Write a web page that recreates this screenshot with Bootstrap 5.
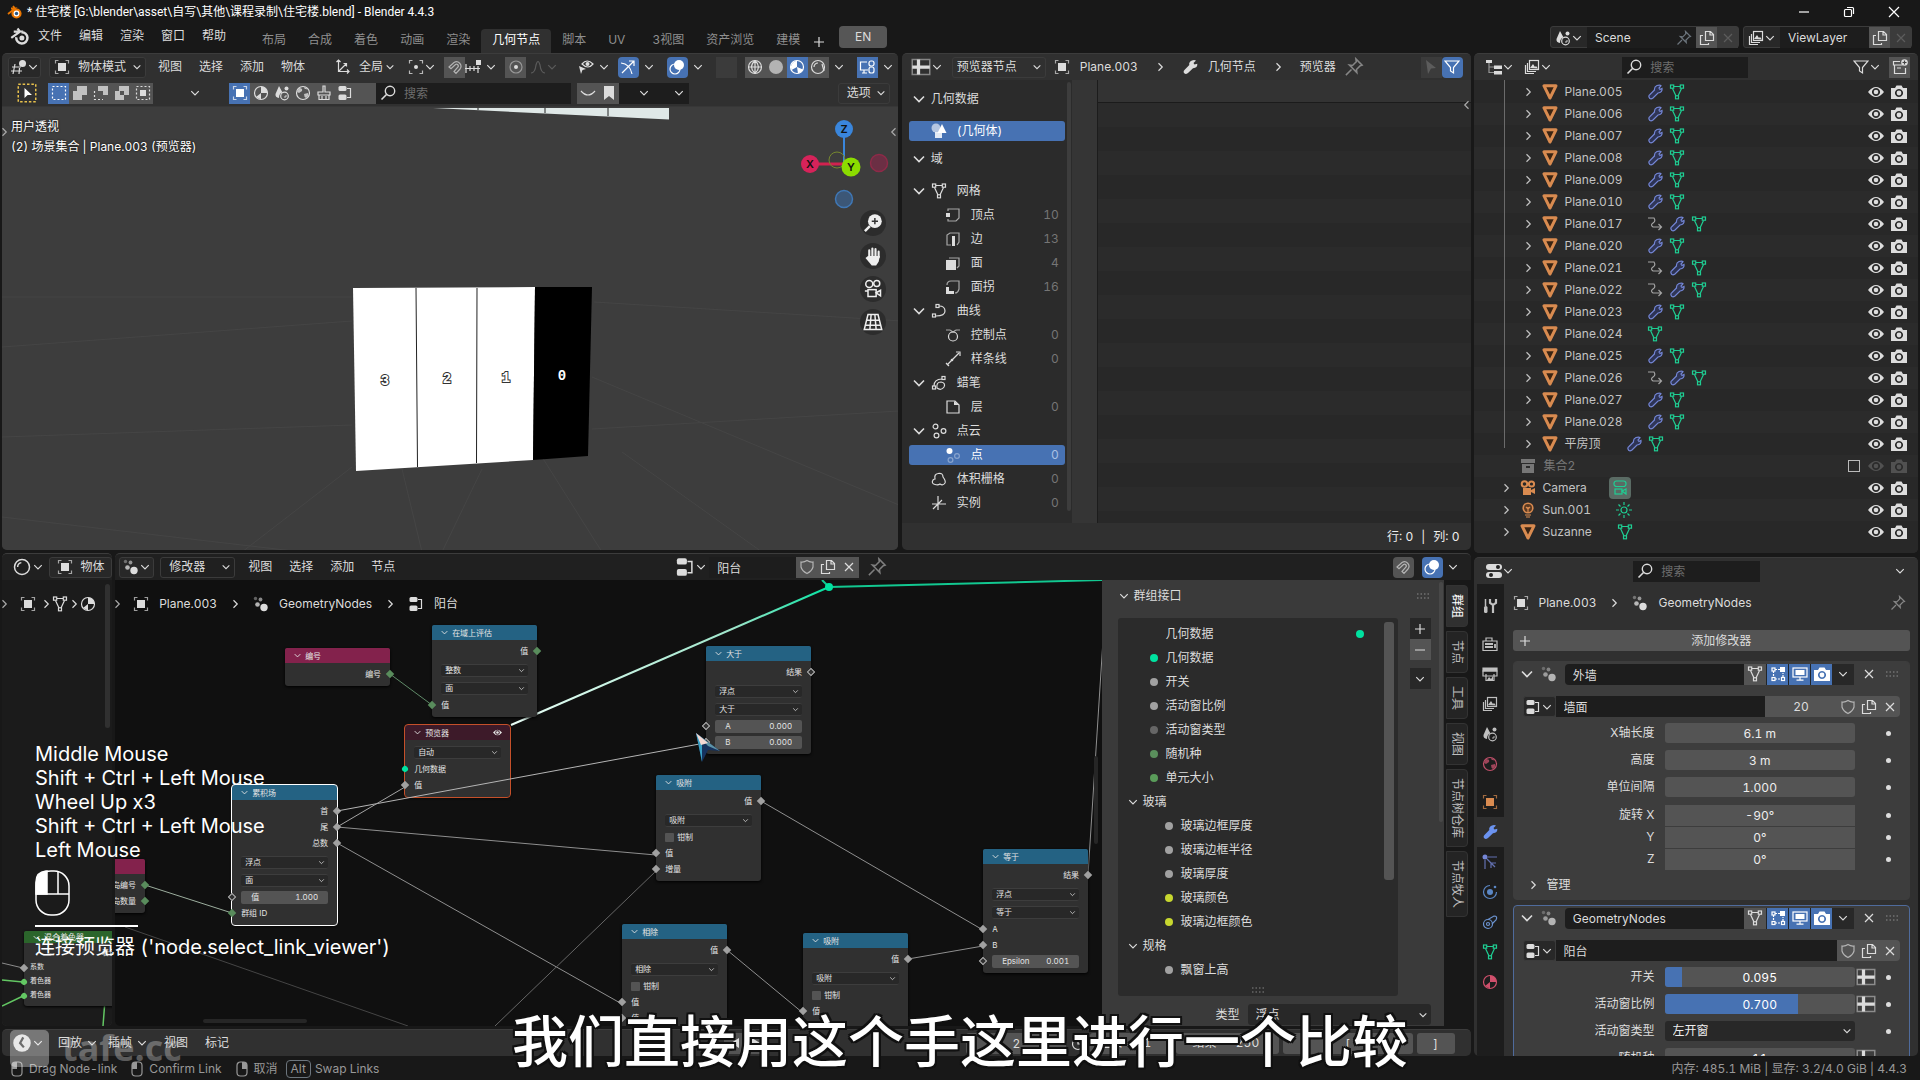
<!DOCTYPE html>
<html lang="zh-CN">
<head>
<meta charset="utf-8">
<meta name="viewport" content="width=device-width, initial-scale=1">
<title>住宅楼.blend - Blender 4.4.3</title>
<link href="https://cdn.jsdelivr.net/npm/bootstrap@5.3.0/dist/css/bootstrap.min.css" rel="stylesheet">
<style>
:root{--blue:#4772b3;--btn:#545454;--dark:#1d1d1d;--head:#303030;--txt:#dcdcdc}
html,body{height:100%}
body{background:#181818;color:var(--txt);font:12px/16px Inter,"Noto Sans CJK SC",sans-serif;font-variant-numeric:tabular-nums;overflow:hidden}
button,input,select{font:inherit;color:inherit;border:0;background:none;padding:0;margin:0;min-width:0}
a{color:inherit;text-decoration:none}
.ic{display:block;width:16px;height:16px;fill:none;stroke:currentColor;stroke-width:1.2;flex:none}
.ic-lg{width:20px;height:20px}.ic-sm{width:12px;height:12px}
i{display:block;flex:none;font-style:normal}
.nw{white-space:nowrap}
.titlebar{height:22px;padding:2px 18px 0 7px;color:#fff;font-family:Roboto,"Noto Sans CJK SC",sans-serif}
.winbtns{gap:29px}
.menubar{height:31px;padding:0 8px 0 10px}
.menus{display:flex;gap:17px}
.tabs a{display:block;padding:3px 11px 4px;color:#8f8f8f;border-radius:4px 4px 0 0}
.tabs a.on{background:var(--head);color:#fff}
.tabs{margin:7px 0 0 25px}
.enbtn{width:48px;height:22px;background:#565656;border-radius:4px;margin-left:12px}
.area{background:var(--head);border-radius:5px;overflow:hidden;border-top:1px solid #3c3c3c;min-width:0;min-height:0;display:flex;flex-direction:column}
.hd{height:26px;flex:none;display:flex;align-items:center}
.bx{height:21px;display:flex;align-items:center;justify-content:center;flex:none}
.sq{width:21px;height:21px;display:flex;align-items:center;justify-content:center;background:var(--btn);flex:none}
.sq.on{background:var(--blue);color:#fff}
.sq.dim{background:#3b3b3b;color:#5c5c5c}
.chip{background:#282828;border:1px solid #3b3b3b;border-radius:3px}
.fld{background:var(--dark);height:21px}
.fld::placeholder{color:#6d6d6d}
.h22{height:22px}
.pick{appearance:none;-webkit-appearance:none;background:transparent url("data:image/svg+xml,%3Csvg xmlns='http://www.w3.org/2000/svg' viewBox='0 0 12 12' fill='none' stroke='%23dddddd' stroke-width='1.3'%3E%3Cpath d='M2 4l4 4 4-4'/%3E%3C/svg%3E") no-repeat right 3px center/10px;height:21px}
.main{flex:1;min-height:0;padding:0 2px;gap:3px}
.leftcol{gap:3px;min-width:0}
.rightcol{flex:0 0 23.2%;gap:4px;min-width:0}
.row-top{flex:497 1 0;gap:4px;min-height:0}
.row-bot{flex:473 1 0;gap:3px;min-height:0}
.a-view{flex:0 0 61%}.a-shade{flex:0 0 7.5%}
.view{flex:1;position:relative;background:#3d3d3d;border-top:1px solid #373737;min-height:0}
.view svg.scene{position:absolute;inset:0;width:100%;height:100%}
.info{position:absolute;left:9px;top:10px;line-height:20px;color:#fff;text-shadow:0 0 2px #000}
.navs{position:absolute;right:12px;top:103px;gap:7px}
.navs button{width:26px;height:26px;border-radius:50%;background:#2c2c2c;display:flex;align-items:center;justify-content:center;color:#eee}
.fold{position:absolute;color:#aaa}
/* spreadsheet */
.ss-side{flex:0 0 170px;background:#2b2b2b;position:relative;padding:1px 7px 0}
.ss-h{height:36px;padding-left:2px}
.ss-r{height:20px;margin-bottom:4px;padding:0 6px 0 2px;border-radius:3px}
.ss-r.on{background:var(--blue);color:#fff}
.ss-r .cnt{color:#757575;margin-left:auto}
.ss-r.on .cnt{color:#a9c0e4}
.sbar{position:absolute;background:#3d3d3d;border-radius:3px}
.ss-col{flex:0 0 26px;background:#353535;border-right:1px solid #1c1c1c}
.ss-head{height:23px;background:#333;border-bottom:1px solid #1b1b1b}
.ss-body{flex:1;background:repeating-linear-gradient(#2b2b2b 0 24px,#282828 24px 48px)}
.ss-foot{height:27px;padding-right:11px;color:#eee}
/* outliner */
.ol{flex:1;background:#282828;position:relative;padding-top:1px;overflow:hidden}
.ol-r{height:22px;color:#c3c3c3;padding-right:11px}
.ol-r:nth-child(even){background:#2b2b2b}
.ol-line{position:absolute;left:30px;top:0;height:368px;border-left:1px solid #6b6b6b}
.or,.ptabs .or{color:#d98b50}.gr,.ptabs .gr{color:#1fce93}.bl,.ptabs .bl{color:#7486d6}
/* node editors */
.cv{position:relative;flex:1;background:#101010;overflow:hidden;min-width:0}
.cv>svg{position:absolute;inset:0;width:100%;height:100%}
.crumb{position:absolute;left:18px;top:16px;display:flex;align-items:center}
.crumb span,.pcrumb span{margin-left:10px}
.crumb .sep,.pcrumb .sep{margin:0 12px}
.nd{position:absolute;width:105px;background:#303030;border-radius:3px;font-size:8px;padding-bottom:4px;box-shadow:0 1px 3px #000;color:#e4e4e4}
.nd-h{height:15px;line-height:14px;margin-bottom:3px;border-radius:2px 2px 0 0;padding:0 8px;display:flex;align-items:center;gap:3px;background:#246283}
.nd-h.red{background:#83224c}.nd-h.vw{background:#3d1a29}.nd-h.grn{background:#2b652b;height:12px}
.nd .ic{width:9px;height:9px}
.nr{position:relative;height:16px;padding:0 9px;display:flex;align-items:center}
.nr.s{height:18px}.nr.f{margin-top:2px}
.nd-h.grn~.nr{height:14px;padding:0 6px;font-size:7px}
.nr .pick{width:100%;height:13px;background-color:#282828;background-size:7px;padding-left:4px;border-radius:2px;color:#e4e4e4;border-top:1px solid #3d3d3d;border-bottom:1px solid #3d3d3d;line-height:11px}
.nr .num{display:flex;width:100%;height:13px;background:#545454;border-radius:2px;padding:0 10px;align-items:center}
.nr .num input{width:32px;text-align:right;margin-left:auto}
.nr input[type=checkbox]{appearance:none;width:9px;height:9px;background:#545454;border-radius:1px;margin-right:3px}
.sk{position:absolute;width:6px;height:6px;top:5px;transform:rotate(45deg);background:#a1a1a1;border:0}
.sk.l{left:-3px}.sk.r{right:-3px}.sk.g{background:#598c5c}.sk.h{background:#303030;border:1px solid #b5b5b5}
.sk.c{border-radius:50%;background:#00e2a0}.sk.k{border-radius:50%;background:#63c763}
.gside{flex:0 0 342px;background:#3a3a3a;position:relative;padding:0 13px 0 16px;overflow:hidden}
.glist{flex:1;height:378px;background:#2b2b2b;border-radius:3px;position:relative;padding-top:4px}
.gr-r{height:24px;display:flex;align-items:center}
.dot{width:8px;height:8px;border-radius:50%;flex:none}
.gtabs{flex:0 0 26px;background:#181818;padding:5px 3px 0 2px;gap:4px}
.gtabs a{writing-mode:vertical-rl;text-orientation:sideways;background:#242424;border:1px solid #333;border-radius:0 4px 4px 0;padding:8px 2px;line-height:16px;color:#bdbdbd}
.gtabs a.on{background:#303030;color:#fff}
/* properties */
.ptabs{flex:0 0 27px;background:#1d1d1d;margin-left:3px;padding-top:7px}
.ptabs button{height:30px;width:27px;display:flex;align-items:center;justify-content:center;color:#c0c0c0}
.ptabs .gap8{margin-bottom:8px}
.pbody{flex:1;min-width:0;padding:0 8px 0 9px;overflow:hidden}
.pn{background:#3d3d3d;border-radius:4px;padding:1px 9px 0 5px;border:1px solid #3d3d3d}
.pn.act{border-color:#4f6b9c}
.phead .sq{width:22px}
.pr{display:flex;align-items:center;height:20px;margin-bottom:7px}
.pr label{width:146px;text-align:right;padding-right:10px;flex:none}
.pr .val{flex:1;height:20px;background-color:var(--btn);text-align:center;border-radius:3px;min-width:0;color:#eee}
.pr .val.pick{background-color:#282828;text-align:left}
.pr .vw{flex:1;position:relative;height:20px;background:var(--btn);border-radius:3px;overflow:hidden;min-width:0}
.pr .vw input{position:relative;width:100%;height:20px;text-align:center;color:#fff}
.pr .bar{position:absolute;left:0;top:0;bottom:0;background:var(--blue)}
.pr .at{width:22px;display:flex;justify-content:center;flex:none}
.pr .kd{width:23px;flex:none;display:flex;justify-content:center}
.pr .kd::after{content:"";width:5px;height:5px;border-radius:50%;background:#ddd}
.tight{height:22px;margin:0}
.tight .val{height:21px;border-radius:0}
.tl{height:27px;flex:none}
.status{height:24px;color:#989898;padding:2px 13px 0 9px;align-items:center}
.keys{position:absolute;left:35px;top:742px;font-size:20px;line-height:24px;color:#fff;pointer-events:none}
.keys hr{width:103px;border:0;border-top:2px solid #fff;opacity:1;margin:9px 0 8px}
.caption1{position:absolute;left:0;right:0;bottom:6px;text-align:center;font:500 56px/72px "Noto Sans CJK SC",sans-serif;color:#fff;text-shadow:2px 0 #111,-2px 0 #111,0 2px #111,0 -2px #111,2px 2px #111,-2px -2px #111,2px -2px #111,-2px 2px #111;pointer-events:none}
.wm{position:absolute;left:10px;bottom:13px;gap:13px;align-items:center;opacity:.34;font:700 36px/38px "Open Sans",sans-serif;color:#ddd;pointer-events:none}
.wm div{width:39px;height:37px;background:#fff;border-radius:5px}
.tnum{background:var(--btn);height:21px;border-radius:3px}
.cursor{position:absolute;left:694px;top:731px}
</style>
</head>
<body class="d-flex flex-column position-relative">
<header class="titlebar d-flex align-items-center nw">
 <i data-i="blenderc"></i><span class="ms-1">* 住宅楼 [G:\blender\asset\自写\其他\课程录制\住宅楼.blend] - Blender 4.4.3</span>
 <div class="winbtns d-flex ms-auto">
  <button aria-label="最小化"><i data-i="min"></i></button><button aria-label="还原"><i data-i="restore"></i></button><button aria-label="关闭"><i data-i="close"></i></button>
 </div>
</header>
<nav class="menubar d-flex nw">
 <div class="d-flex align-items-center pb-1"><i data-i="blender" data-c="ic-lg"></i>
 <div class="menus ms-2"><a href="#">文件</a><a href="#">编辑</a><a href="#">渲染</a><a href="#">窗口</a><a href="#">帮助</a></div></div>
 <div class="tabs d-flex"><a href="#">布局</a><a href="#">合成</a><a href="#">着色</a><a href="#">动画</a><a href="#">渲染</a><a href="#" class="on">几何节点</a><a href="#">脚本</a><a href="#">UV</a><a href="#" class="ps-3">3视图</a><a href="#">资产浏览</a><a href="#">建模</a></div>
 <button class="mt-2" aria-label="添加工作区"><i data-i="plus"></i></button>
 <button class="enbtn mt-1">EN</button>
 <div class="d-flex ms-auto mt-1">
  <div class="d-flex chip h22 me-1"><button class="bx px-1" aria-label="场景"><i data-i="scene"></i><i data-i="cd" data-c="ic-sm"></i></button><input class="fld ps-2" style="width:89px" value="Scene" aria-label="场景名"><span class="fld bx pe-1 text-secondary"><i data-i="pin"></i></span><button class="sq" aria-label="新建场景"><i data-i="copy"></i></button><button class="sq dim" aria-label="删除场景"><i data-i="x"></i></button></div>
  <div class="d-flex chip h22"><button class="bx px-1" aria-label="视图层"><i data-i="vlayer"></i><i data-i="cd" data-c="ic-sm"></i></button><input class="fld ps-2" style="width:89px" value="ViewLayer" aria-label="视图层名"><button class="sq" aria-label="新建视图层"><i data-i="copy"></i></button><button class="sq dim" aria-label="删除视图层"><i data-i="x"></i></button></div>
 </div>
</nav>

<main class="main d-flex">
<div class="leftcol d-flex flex-column flex-fill">
 <div class="row-top d-flex">
  <!-- 3D viewport -->
  <section class="area a-view nw">
   <div class="hd pe-1" style="padding-left:6px">
    <button class="bx chip" style="width:33px" aria-label="编辑器类型"><i data-i="ed3d"></i><i data-i="cd" data-c="ic-sm"></i></button>
    <label class="bx chip ps-1" style="margin-left:8px"><i data-i="obj"></i><select class="pick ps-2" style="width:75px" aria-label="模式"><option>物体模式</option></select></label>
    <div class="menus" style="margin-left:12px"><a href="#">视图</a><a href="#">选择</a><a href="#">添加</a><a href="#">物体</a></div>
    <label class="bx" style="margin-left:30px"><i data-i="axes"></i><select class="pick ps-2" style="width:47px" aria-label="坐标系"><option>全局</option></select></label>
    <button class="bx" style="margin-left:10px" aria-label="轴心点"><i data-i="pivot"></i><i data-i="cd" data-c="ic-sm"></i></button>
    <button class="sq ms-2" aria-label="吸附"><i data-i="magnet"></i></button><button class="bx" aria-label="吸附至"><i data-i="snap"></i><i class="ms-1" data-i="cd" data-c="ic-sm"></i></button>
    <button class="sq ms-2" aria-label="衰减编辑"><i data-i="prop"></i></button><button class="bx ps-1 opacity-25" aria-label="衰减"><i data-i="fall"></i><i data-i="cd" data-c="ic-sm"></i></button>
    <div class="d-flex ms-auto align-items-center">
     <button class="bx" aria-label="可见性"><i data-i="vis"></i><i class="ms-1" data-i="cd" data-c="ic-sm"></i></button>
     <button class="sq on ms-2 rounded-1" aria-label="Gizmo"><i data-i="gizmo"></i></button><button class="bx px-1" aria-label="Gizmo 选项"><i data-i="cd" data-c="ic-sm"></i></button>
     <button class="sq on ms-2 rounded-1" aria-label="叠加层"><i data-i="over"></i></button><button class="bx px-1" aria-label="叠加层选项"><i data-i="cd" data-c="ic-sm"></i></button>
     <button class="sq dim ms-2" aria-label="透视"></button>
     <button class="sq ms-2" aria-label="线框"><i data-i="wire"></i></button><button class="sq" aria-label="实体"><i data-i="solid"></i></button><button class="sq on" aria-label="材质预览"><i data-i="mprev"></i></button><button class="sq" aria-label="渲染"><i data-i="rend"></i></button><button class="bx px-1" aria-label="着色选项"><i data-i="cd" data-c="ic-sm"></i></button>
     <button class="sq on ms-2" aria-label="屏幕"><i data-i="link"></i></button><button class="bx ps-1" aria-label="更多"><i data-i="cd" data-c="ic-sm"></i></button>
    </div>
   </div>
   <div class="hd pe-2" style="padding-left:14px">
    <button class="bx" style="width:22px;color:#e8c14c" aria-label="选择工具"><i data-i="tool1" data-c="ic-lg"></i></button>
    <div class="d-flex" style="margin-left:10px"><button class="sq on" aria-label="新选区"><i data-i="s1"></i></button><button class="sq" aria-label="扩展"><i data-i="s2"></i></button><button class="sq" aria-label="减去"><i data-i="s3"></i></button><button class="sq" aria-label="反转"><i data-i="s4"></i></button><button class="sq" aria-label="相交"><i data-i="s5"></i></button></div>
    <button class="bx ps-2" style="width:76px" aria-label="展开"><i data-i="cd" data-c="ic-sm"></i></button>
    <div class="d-flex"><button class="sq on" aria-label="物体"><i data-i="obj"></i></button><button class="sq" aria-label="材质"><i data-i="mat"></i></button><button class="sq" aria-label="场景"><i data-i="scene"></i></button><button class="sq" aria-label="世界"><i data-i="world"></i></button><button class="sq" aria-label="笔刷"><i data-i="brush"></i></button><button class="sq" aria-label="节点组"><i data-i="tree"></i></button><button class="sq" aria-label="空"></button></div>
    <label class="d-flex align-items-center fld ps-1"><i data-i="search"></i><input class="fld ps-2" style="width:175px" placeholder="搜索" aria-label="搜索"></label>
    <div class="d-flex" style="margin-left:6px"><button class="sq" aria-label="筛选"><i data-i="arc"></i></button><button class="sq" aria-label="书签"><i data-i="mark"></i></button></div>
    <button class="bx fld justify-content-end pe-1" style="width:35px" aria-label="选项一"><i data-i="cd" data-c="ic-sm"></i></button><button class="bx fld justify-content-end pe-1" style="width:35px" aria-label="选项二"><i data-i="cd" data-c="ic-sm"></i></button>
    <select class="pick chip ms-auto ps-2" style="width:52px" aria-label="选项"><option>选项</option></select>
   </div>
   <div class="view">
    <svg class="scene" aria-hidden="true">
     <g stroke="#454545" fill="none"><path d="M0 190H350M592 195L900 214M0 330L350 318M590 322L897 304M480 362L440 445M400 362L420 445M350 360L240 445M540 350L600 445M590 270L897 398M0 240L350 214M0 410L300 445M620 345L760 445"/></g>
     <path d="M431 1H667V12.500Z" fill="#dfe8e7"/><path d="M476 1v2M543 1v5M606 1v8" stroke="#222"/>
     <path d="M351 181L533 180 531 353 354 364Z" fill="#fff"/><path d="M533 180L590 180 586 349 531 353Z" fill="#000"/>
     <path d="M414 181L415.500 360M475 181L474.500 356" stroke="#222"/>
     <g font-size="14" font-weight="700" font-family="Liberation Mono" text-anchor="middle" stroke="#333" stroke-width="2" paint-order="stroke" fill="#fff"><text x="383" y="278">3</text><text x="445" y="276">2</text><text x="504" y="275">1</text><text x="560" y="273" stroke="none">0</text></g>
     <path d="M842 22V58" stroke="#3a86dc" stroke-width="2"/><path d="M808 57H849" stroke="#d1224f" stroke-width="3"/>
     <circle cx="835" cy="53" r="8" stroke="#76882f" fill="none"/><circle cx="842" cy="92" r="8.500" fill="#3c5777" stroke="#3f77b5" stroke-width="1.500"/><circle cx="877" cy="56" r="8.500" fill="#6b2f44" stroke="#8d2a48" stroke-width="1.500"/>
     <circle cx="842" cy="22" r="9" fill="#3a86dc"/><circle cx="808" cy="57" r="9" fill="#d6235a"/><circle cx="849" cy="60" r="9.500" fill="#8bdc00"/>
     <g font-size="11" font-weight="600" text-anchor="middle" fill="#111"><text x="842" y="26">Z</text><text x="808" y="61">X</text><text x="849" y="64">Y</text></g>
    </svg>
    <div class="info">用户透视<br>(2) 场景集合 | Plane.003 (预览器)</div>
    <div class="navs d-flex flex-column"><button aria-label="缩放"><i data-i="zoom" data-c="ic-lg"></i></button><button aria-label="平移"><i data-i="hand" data-c="ic-lg"></i></button><button aria-label="相机"><i data-i="movie" data-c="ic-lg"></i></button><button aria-label="透视"><i data-i="grid" data-c="ic-lg"></i></button></div>
    <i class="fold" style="right:-2px;top:19px" data-i="cl" data-c="ic-sm"></i><i class="fold" style="left:-4px;top:19px" data-i="cr" data-c="ic-sm"></i>
   </div>
  </section>
  <!-- spreadsheet -->
  <section class="area flex-fill nw position-relative">
   <div class="hd ps-2 pe-2">
    <button class="bx" style="width:34px" aria-label="编辑器类型"><i data-i="sheet" data-c="ic-lg"></i><i data-i="cd" data-c="ic-sm"></i></button>
    <select class="pick chip ms-2 ps-1" style="width:94px" aria-label="数据源"><option>预览器节点</option></select>
    <i class="ms-2" data-i="obj"></i><span style="margin-left:10px">Plane.003</span><i class="mx-3" data-i="cr" data-c="ic-sm"></i><i data-i="wrenchf"></i><span style="margin-left:10px">几何节点</span><i class="mx-3" data-i="cr" data-c="ic-sm"></i><span>预览器</span><i class="ms-2 opacity-50" data-i="pin" data-c="ic-lg"></i>
    <button class="sq dim ms-auto" aria-label="仅选中"><i data-i="arrow"></i></button><button class="sq on rounded-1" aria-label="筛选"><i data-i="filter"></i></button>
   </div>
   <div class="d-flex flex-fill" style="min-height:0">
    <div class="ss-side" id="ss"><div class="sbar" style="left:165px;top:2px;width:4px;bottom:12px"></div>
     <div class="ss-h d-flex align-items-center"><i data-i="cd"></i><span class="ms-1">几何数据</span></div></div>
    <div class="ss-col"></div>
    <div class="d-flex flex-column flex-fill"><div class="ss-head"></div><div class="ss-body"></div></div>
   </div>
   <div class="ss-foot d-flex align-items-center justify-content-end gap-2"><span>行: 0</span><span>|</span><span>列: 0</span></div>
   <i class="fold" style="right:-2px;top:45px" data-i="cl" data-c="ic-sm"></i>
  </section>
 </div>
 <div class="row-bot d-flex">
  <!-- shader editor -->
  <section class="area a-shade nw">
   <div class="hd" style="background:#202020;padding-left:9px"><button class="bx" style="width:34px" aria-label="编辑器类型"><i data-i="ball" data-c="ic-lg"></i><i data-i="cd" data-c="ic-sm"></i></button><button class="bx chip ms-1 px-1 flex-fill"><i data-i="obj"></i><span class="ms-2">物体</span></button></div>
   <div class="cv" id="cv0" style="background:#1b1b1b">
    <svg aria-hidden="true"><g fill="none"><path d="M0 383L21 388" stroke="#8c8c8c"/><path d="M0 400L21 402M0 426L21 416M101 446L103 420" stroke="#63c763" stroke-width="1.500"/></g></svg>
    <div class="crumb"><i data-i="obj"></i><i class="ms-1" data-i="cr" data-c="ic-sm"></i><i data-i="mesh"></i><i data-i="cr" data-c="ic-sm"></i><i data-i="mat"></i></div>
    <i class="fold" style="left:-4px;top:18px" data-i="cr" data-c="ic-sm"></i><i class="fold" style="right:-2px;top:18px" data-i="cl" data-c="ic-sm"></i>
    <div class="sbar" style="right:2px;top:4px;width:5px;height:144px;background:#303030"></div>
   </div>
  </section>
  <!-- geometry nodes -->
  <section class="area flex-fill nw" style="background:#202020">
   <div class="hd ps-1 pe-2">
    <button class="bx chip" style="width:35px" aria-label="编辑器类型"><i data-i="geo"></i><i data-i="cd" data-c="ic-sm"></i></button>
    <select class="pick chip ps-2" style="width:75px;margin-left:6px" aria-label="节点树类型"><option>修改器</option></select>
    <div class="menus" style="margin-left:13px"><a href="#">视图</a><a href="#">选择</a><a href="#">添加</a><a href="#">节点</a></div>
    <div style="flex:278 1 0"></div>
    <div class="d-flex align-items-center"><button class="bx" style="width:36px" aria-label="节点组"><i data-i="tree" data-c="ic-lg"></i><i data-i="cd" data-c="ic-sm"></i></button><input class="fld ps-2" style="width:87px" value="阳台" aria-label="节点组名"><button class="sq" aria-label="伪用户"><i data-i="shield"></i></button><button class="sq" aria-label="新建"><i data-i="copy"></i></button><button class="sq" aria-label="断开"><i data-i="x"></i></button><i class="ms-2 opacity-50" data-i="pin" data-c="ic-lg"></i></div>
    <div style="flex:505 1 0"></div>
    <button class="sq rounded-1" aria-label="吸附"><i data-i="magnet"></i></button><button class="sq on rounded-1 ms-2" aria-label="叠加层"><i data-i="over"></i></button><button class="bx px-1" aria-label="叠加层选项"><i data-i="cd" data-c="ic-sm"></i></button>
   </div>
   <div class="d-flex flex-fill" style="min-height:0">
    <div class="cv" id="cv1">
     <svg id="lk0" aria-hidden="true"><defs><linearGradient id="lg" x1="0" y1="1" x2="1" y2="0"><stop offset="0" stop-color="#eafff7"/><stop offset=".7" stop-color="#9fe6cb"/><stop offset="1" stop-color="#00e2a0"/></linearGradient></defs></svg>
     <div class="crumb"><i data-i="obj"></i><span>Plane.003</span><i class="sep" data-i="cr" data-c="ic-sm"></i><i data-i="geo"></i><span>GeometryNodes</span><i class="sep" data-i="cr" data-c="ic-sm"></i><i data-i="tree"></i><span>阳台</span></div>
     <div class="sbar" style="right:4px;top:176px;width:4px;height:88px;background:#262626"></div>
     <div class="sbar" style="left:88px;bottom:3px;width:104px;height:4px;background:#262626"></div>
     <i class="fold" style="left:-4px;top:18px" data-i="cr" data-c="ic-sm"></i>
    </div>
    <aside class="gside"><div class="sbar" style="right:1px;top:2px;width:4px;height:240px;background:#484848"></div>
     <div class="d-flex align-items-center" style="height:38px;padding-bottom:6px"><i data-i="cd" data-c="ic-sm"></i><span class="ms-1">群组接口</span><i class="ms-auto opacity-50" data-i="grip"></i></div>
     <div class="d-flex">
      <div class="glist" id="gl"><div class="sbar" style="right:4px;top:4px;width:10px;height:258px;background:#545454"></div></div>
      <div class="ms-2 d-flex flex-column"><button class="sq ms-1" style="background:#282828" aria-label="添加"><i data-i="plus"></i></button><button class="sq ms-1" aria-label="移除"><i data-i="minus"></i></button><button class="sq ms-1 mt-2" style="background:#282828" aria-label="更多"><i data-i="cd" data-c="ic-sm"></i></button></div>
     </div>
     <div class="d-flex align-items-center mt-2 justify-content-end"><label for="tp" class="me-2">类型</label><select id="tp" class="pick ps-2" style="width:183px;background-color:#282828;border-radius:3px"><option>浮点</option></select></div>
    </aside>
    <nav class="gtabs d-flex flex-column"><a href="#" class="on">群组</a><a href="#">节点</a><a href="#">工具</a><a href="#">视图</a><a href="#">节点树仓库</a><a href="#">节点牧人</a></nav>
   </div>
  </section>
 </div>
 <!-- timeline -->
 <section class="area tl nw flex-row align-items-center ps-2">
  <button class="bx" style="width:36px" aria-label="编辑器类型"><i data-i="clock" data-c="ic-lg"></i><i data-i="cd" data-c="ic-sm"></i></button>
  <button class="bx ms-2 ps-1">回放<i class="ms-1" data-i="cd" data-c="ic-sm"></i></button><button class="bx" style="margin-left:10px">插帧<i class="ms-1" data-i="cd" data-c="ic-sm"></i></button><div class="menus ms-3"><a href="#">视图</a><a href="#">标记</a></div>
  <div class="d-flex ms-auto align-items-center pe-3 gap-1"><div class="d-flex me-5 pe-5"><button class="sq" aria-label="首帧"><i data-i="pl"></i></button><button class="sq" aria-label="播放"><i data-i="pr"></i></button></div><div class="me-5 pe-5"></div><input class="tnum text-center" style="width:100px" value="2" aria-label="当前帧"><i data-i="clk"></i><label class="tnum d-flex align-items-center ps-2">起始<input class="text-center" style="width:50px" value="1"></label><label class="tnum d-flex align-items-center ps-3">结束<input class="text-center" style="width:62px" value="250"></label><input class="tnum text-center" style="width:130px" value="[" aria-label="预览起始"><input class="tnum text-center" style="width:38px" value="]" aria-label="预览结束"></div>
 </section>
</div>

<div class="rightcol d-flex flex-column">
 <!-- outliner -->
 <section class="area nw" style="flex:500 1 0">
  <div class="hd ps-2 pe-2">
   <button class="bx ps-1" style="width:32px" aria-label="编辑器类型"><i data-i="outl"></i><i data-i="cd" data-c="ic-sm"></i></button><button class="bx ms-2" style="width:32px" aria-label="显示模式"><i data-i="vlayer"></i><i data-i="cd" data-c="ic-sm"></i></button>
   <div style="flex:67 1 0"></div>
   <label class="d-flex align-items-center fld ps-1"><i data-i="search"></i><input class="fld ps-2" style="width:106px" placeholder="搜索" aria-label="搜索大纲"></label>
   <div style="flex:102 1 0"></div>
   <button class="bx me-2" aria-label="筛选"><i data-i="filter"></i><i data-i="cd" data-c="ic-sm"></i></button><button class="sq" aria-label="新建集合"><i data-i="newcol"></i></button>
  </div>
  <div class="ol"><div id="ol"></div><div class="ol-line"></div></div>
 </section>
 <!-- properties -->
 <section class="area nw" style="flex:499 1 0">
  <div class="hd ps-2 pe-2"><button class="bx ps-1" style="width:32px" aria-label="编辑器类型"><i data-i="props"></i><i data-i="cd" data-c="ic-sm"></i></button>
   <div style="flex:118 1 0"></div><label class="d-flex align-items-center fld ps-1"><i data-i="search"></i><input class="fld ps-2" style="width:107px" placeholder="搜索" aria-label="搜索属性"></label><div style="flex:132 1 0"></div><button class="bx pe-1" aria-label="选项"><i data-i="cd" data-c="ic-sm"></i></button></div>
  <div class="d-flex flex-fill" style="min-height:0">
   <nav class="ptabs">
    <button class="gap8" aria-label="工具"><i data-i="tools"></i></button><button aria-label="渲染"><i data-i="render"></i></button><button aria-label="输出"><i data-i="printer"></i></button><button aria-label="视图层"><i data-i="vlayer"></i></button><button aria-label="场景"><i data-i="scene"></i></button><button class="gap8" style="color:#c0506a" aria-label="世界"><i data-i="world"></i></button><button class="or" aria-label="物体"><i data-i="obj"></i></button><button style="background:#303030;color:#6b93f0" aria-label="修改器"><i data-i="wrenchf"></i></button><button class="bl" aria-label="粒子"><i data-i="part"></i></button><button style="color:#5b87c5" aria-label="物理"><i data-i="phys"></i></button><button style="color:#6b93d0" aria-label="约束"><i data-i="cons"></i></button><button class="gr" aria-label="数据"><i data-i="mesh"></i></button><button style="color:#d0506c" aria-label="材质"><i data-i="mat"></i></button>
   </nav>
   <div class="pbody">
    <div class="pcrumb d-flex align-items-center" style="height:42px;padding-bottom:4px"><i data-i="obj"></i><span>Plane.003</span><i class="sep" data-i="cr" data-c="ic-sm"></i><i data-i="geo"></i><span>GeometryNodes</span><i class="ms-auto me-1 opacity-50" data-i="pin"></i></div>
    <button class="d-flex w-100 align-items-center ps-1 mt-1" style="height:21px;background:#545454;border-radius:3px;margin-bottom:10px"><i data-i="plus"></i><span class="flex-fill text-center">添加修改器</span></button>
    <div id="pn"></div>
   </div>
  </div>
 </section>
</div>
</main>
<footer class="status d-flex nw"><i data-i="ml"></i><span class="ms-1">Drag Node-link</span><i class="ms-2 ps-1" data-i="ml"></i><span class="ms-1">Confirm Link</span><i class="ms-2 ps-1" data-i="mr"></i><span class="ms-1">取消</span><kbd class="ms-2 py-0 px-1 border border-secondary bg-transparent rounded-1" style="font:inherit;color:inherit">Alt</kbd><span class="ms-1">Swap Links</span><span class="ms-auto">内存: 485.1 MiB | 显存: 3.2/4.0 GiB | 4.4.3</span></footer>

<div class="wm d-flex"><div></div><span>tafe.cc</span></div>
<div class="keys nw">Middle Mouse<br>Shift + Ctrl + Left Mouse<br>Wheel Up x3<br>Shift + Ctrl + Left Mouse<br>Left Mouse
 <svg class="d-block mt-2" width="36" height="46" fill="none" stroke="#fff" stroke-width="1.500" aria-hidden="true"><path d="M12 1H11Q1 2 1 12V24H12Z" fill="#fff"/><rect x="1" y="1" width="33" height="44" rx="15"/><path d="M1 24H34M23 1V24"/></svg>
 <hr>连接预览器 ('node.select_link_viewer')</div>
<svg class="cursor" width="30" height="36" aria-hidden="true"><path d="M2 2L26 20 14 19 8 31Z" fill="#16325e"/><path d="M2 2L26 20 14 15Z" fill="#5d93a8"/><path d="M2 2L8 31 8 12Z" fill="#3aa0c4"/><path d="M2 2L14 12 7 14Z" fill="#f4d9d4"/></svg>
<div class="caption1 nw">我们直接用这个手这里进行一个比较</div>

<script src="https://cdn.jsdelivr.net/npm/bootstrap@5.3.0/dist/js/bootstrap.bundle.min.js"></script>
<script>
const F='fill="currentColor" stroke="none"';
const P={
blender:`<path d="M1 9.500L8 4.500H3M8 4.500L6 2" stroke-width="1.800"/><path d="M5 9a4.500 4.500 0 1 0 4-4" stroke-width="2"/><circle cx="9.500" cy="9.500" r="2" ${F}/>`,
blenderc:`<path d="M1 10L8 4.500H4M8 4.500L6 2" stroke="#ea7600" stroke-width="1.800"/><circle cx="9.500" cy="9.500" r="4" stroke="#ea7600" stroke-width="2.200" fill="#fff"/><circle cx="9.500" cy="9.500" r="1.700" fill="#265787" stroke="none"/>`,
min:'<path d="M3 8h10"/>',restore:'<rect x="3.500" y="5.500" width="7" height="7" rx="1"/><path d="M6 3.500h5.500q1 0 1 1V10"/>',close:'<path d="M3 3l10 10M13 3L3 13"/>',
plus:'<path d="M8 3v10M3 8h10"/>',minus:'<path d="M3 8h10"/>',x:'<path d="M4 4l8 8M12 4l-8 8"/>',
cd:'<path d="M3 5.500l5 5 5-5" stroke-width="1.600"/>',cr:'<path d="M6 3l5 5-5 5" stroke-width="1.600"/>',cl:'<path d="M10 3L5 8l5 5" stroke-width="1.600"/>',
scene:`<path d="M5 1L1.500 9Q1 12.500 5 13 5 8 8.500 7.500Z" ${F}/><circle cx="12.500" cy="3.500" r="2" ${F}/><circle cx="10.500" cy="11" r="3.800"/><path d="M12 10v2h-2" stroke-width=".9"/>`,
pin:'<path d="M9.500 1.500l5 5-1.500.5-3 3 .3 2.500-6-6 2.500.3 3-3zM6 10l-4.500 4.500"/>',
copy:`<path d="M6.500 1.500h5l3 3v6h-8zM11 1.500V5h3.500"/><path d="M4 5.500H1.500v9h8V13"/>`,
vlayer:`<rect x="5.500" y="1.500" width="9" height="9"/><path d="M6 9l3-4 2 3 1-1 2 2.500z" ${F}/><path d="M3.500 4v8.500H12M1.500 6v8.500H10"/>`,
ed3d:`<path d="M1 8h9M0 12h11M4 5L2 15M8.500 9L8 15"/><circle cx="11.500" cy="4.500" r="3.500" ${F}/>`,
obj:`<rect x="4" y="4" width="8" height="8" ${F}/><path d="M1.500 4.500v-3h3M11.500 1.500h3v3M14.500 11.500v3h-3M4.500 14.500h-3v-3" opacity=".7"/>`,
axes:'<path d="M3.500 1v11.500H14M3.500 12.500L11 5M1.500 3l2-2 2 2M12 10.500l2 2-2 2M8.500 4.500H11.500v3"/>',
pivot:`<circle cx="8" cy="8" r="2" ${F}/><path d="M1.500 4.500v-3h3M11.500 1.500h3v3M14.500 11.500v3h-3M4.500 14.500h-3v-3" opacity=".8"/>`,
magnet:'<path d="M2 8L7 3.500a4.500 4.500 0 0 1 6 6.500L9 14.500 7 12.500l4-4.500a1.800 1.800 0 0 0-2.500-2.500L4 9.800z" opacity=".7"/>',
snap:`<path d="M1 5v9M5 7v5M9 7v5M13 7v7M0 9.500h15"/><rect x="11" y="1" width="5" height="5" ${F}/>`,
prop:`<circle cx="8" cy="8" r="6" opacity=".5"/><circle cx="8" cy="8" r="2" ${F}/>`,fall:'<path d="M1 14Q5 14 6 6 8-1 10 6 11 14 15 14"/>',
vis:`<path d="M4 5q5-6 11 0-5 6-11 0z"/><circle cx="9.500" cy="5" r="2" ${F}/><path d="M1 7l7 3-3.500 1L3 15z" ${F}/>`,
gizmo:'<path d="M2 14L14 2M9 2h5v5M1 4Q10 5 12 15"/>',
over:`<circle cx="10" cy="6" r="5" ${F}/><circle cx="6" cy="10" r="5"/>`,
wire:'<circle cx="8" cy="8" r="6.500"/><path d="M1.500 8h13M8 1.500v13M8 1.500q-7 6.500 0 13M8 1.500q7 6.500 0 13"/>',solid:`<circle cx="8" cy="8" r="7" ${F} opacity=".7"/>`,
mprev:`<circle cx="8" cy="8" r="6.500"/><path d="M8 1.500V8l6 2.500Q12 14 9 14.500L8 8 2.500 11Q0 4 8 1.500z" ${F}/>`,rend:'<circle cx="8" cy="8" r="6.500"/><path d="M4 8a4 4 0 0 1 4-4M12 5l2 7"/>',
link:'<path d="M8 3H1.500v8H9M5 11v3M3 14h5"/><rect x="10" y="2" width="5" height="5" rx="2"/><rect x="10" y="8" width="5" height="6" rx="2"/>',
tool1:`<rect x="1" y="1" width="14" height="14" stroke-dasharray="2 1.500"/><path d="M6 4v8l2.500-2.500H12z" fill="#fff" stroke="none"/>`,
s1:'<rect x="1.500" y="1.500" width="13" height="13" stroke-dasharray="2 2"/>',s2:`<path d="M5 1h10v9h-5v5H1V6h4z" ${F} opacity=".8"/>`,s3:`<path d="M5 1h10v9h-5V6H5z" ${F} opacity=".8"/><path d="M1.500 6v8.500H10" stroke-dasharray="2 2"/>`,s4:`<path fill-rule="evenodd" d="M5 1h10v9h-5v5H1V6h4zM6 6v4h4V6z" ${F} opacity=".8"/>`,s5:`<rect x="5" y="5" width="6" height="6" ${F}/><rect x="1.500" y="1.500" width="13" height="13" stroke-dasharray="2 2"/>`,
mat:`<circle cx="8" cy="8" r="6.500"/><path d="M8 1.500a6.500 6.500 0 0 1 6.500 6.500H8zM8 8v6.500L3 12z" ${F}/>`,
world:`<circle cx="8" cy="8" r="6.500"/><path d="M4 3q4 0 3 3l-3 2-2-1M9 2q0 3 4 2M9 9l4-1q1 3-2 5-2-1-2-4z" ${F} opacity=".8"/>`,
brush:'<path d="M7 1h2v6h5v3H2V7h5zM3 10v4.500h10V10M6 11v3M10 11v3"/>',
tree:`<rect x="1.500" y="1" width="8" height="5" rx="1.500" ${F}/><rect x="1.500" y="9.500" width="8" height="5.500" rx="1.500" ${F}/><path d="M10 3.500h3.500v9H10"/>`,
search:'<circle cx="10" cy="6" r="4.700" stroke-width="1.400"/><path d="M6.500 9.500L1.500 14.500" stroke-width="1.600"/>',
arc:'<path d="M1 6q7 8 14 0"/>',mark:`<path d="M3 1h10v14l-5-4-5 4z" ${F}/>`,
zoom:`<circle cx="9.500" cy="6.500" r="5.500" ${F}/><path d="M9.500 4v5M7 6.500h5" stroke="#333"/><path d="M5.500 10.500L1.500 14.500" stroke-width="2"/>`,
hand:'<path d="M5 9V3.500M7.500 8V2M10 8V2.500M12.500 9V4.500" stroke-width="1.700" stroke-linecap="round"/><path d="M4 8h9.500l-1 4.500-2 3H7L2 9.500l1-.8z" fill="currentColor" stroke="none"/>',
movie:'<circle cx="5" cy="4" r="2.800"/><circle cx="11" cy="3.500" r="2.400"/><rect x="4" y="8.500" width="6.500" height="5.500"/><path d="M10.500 11l3.500-2v4.500zM4 9.500H1.500"/>',
grid:'<path d="M4 2h8l3 12H1zM3 6.500h10M2 10.500h12M6.500 2L5.500 14M9.500 2l1 12"/>',
sheet:`<rect x="1" y="2" width="14" height="12" opacity=".5"/><path d="M6 2v12M1 8h14" stroke-width="2.600"/>`,
wrench:'<path d="M10 1.500q3-1 4 .2L12 4l1 1.500 2-1q.5 4-4 4.500L6 14q-3 2-4-1-.5-1.500 1-2.500l4.500-4.500Q7 3 10 1.500z" fill="rgba(60,80,190,.3)"/>',
wrenchf:`<path d="M10 1.500q2-1 4 0L11.500 4l1 1.500 2.800-.8q.5 4-4.300 4.600L6 14q-3 2-4.300-.5-.5-1.500 1-2.800l4.600-4.700Q6.500 3 10 1.500z" ${F}/>`,
arrow:`<path d="M3 1l10 8-5 .5L5 15z" ${F}/>`,filter:'<path d="M1 2h14L9.500 8.500V14L6.500 12V8.500z"/>',
prim:`<circle cx="5" cy="5" r="4.500" ${F} opacity=".6"/><path d="M11 1l4.500 9H6.500z" ${F}/><rect x="4" y="9" width="7" height="6" ${F} opacity=".85"/>`,
mesh:'<path d="M5 2.500h6M3.500 4.500L7 12M12.500 4.500L9 12"/><rect x="1.500" y="1" width="3.200" height="3.200"/><rect x="11.300" y="1" width="3.200" height="3.200"/><rect x="6.500" y="11.800" width="3" height="3"/>',
vert:`<rect x="1" y="6" width="4" height="4" ${F}/><path d="M3 4V2h11v9l-3 3H3v-2" opacity=".7"/>`,edge:`<rect x="7" y="5" width="3" height="10" ${F}/><path d="M6 14H2V4l3-2h9v9l-2 3" opacity=".7"/>`,face:`<rect x="1" y="5" width="10" height="10" ${F}/><path d="M4 3h10v8l-2 2" opacity=".7"/>`,corn:`<path d="M1 8h3v4h5v3H1z" ${F}/><path d="M2 6q0-4 4-4h8v8q-1 4-4 4" opacity=".7"/>`,
curve:'<rect x="1.500" y="11" width="3" height="3"/><rect x="5" y="1.500" width="3" height="3"/><path d="M8 3q6 0 6 5t-9 5"/>',ctrl:'<circle cx="8" cy="9.500" r="4.500"/><path d="M1 3h4M11 3h4M5 3l3 2 3-2" opacity=".7"/>',spl:`<path d="M2 14L14 2"/><path d="M1 12l3 3M11 1h4v4" /><circle cx="7" cy="9" r="1.300" ${F}/>`,
gp:'<rect x="1.500" y="11" width="3" height="3"/><rect x="11" y="1.500" width="3" height="3"/><path d="M3 11Q3 4 11 4M6 13q-1-6 4-6 5 1 3 5-3 4-7 1z"/>',layer:`<path d="M2 2h8l4 4v8H2z"/><path d="M9 2v4h5z" ${F}/>`,
pc:'<circle cx="4.500" cy="3.500" r="2.400"/><circle cx="12.500" cy="8" r="2.400"/><circle cx="5.500" cy="12.500" r="2.400"/>',pt:`<circle cx="4.500" cy="4" r="3" ${F}/><g opacity=".35"><circle cx="12" cy="9" r="2.400"/><circle cx="5.500" cy="13" r="2.400"/></g>`,
vol:'<path d="M4 13.500q-4-1-2-4.500 1-1 2-1-1-5 3-5.500 5-1 5 3.500 3 4 2 6-2 3-5 1-2 1.500-5 .5z"/>',inst:'<path d="M7 1v14M1 9h14M2 14l9-9"/>',
outl:`<rect x="0" y="1" width="6" height="3" ${F}/><rect x="8" y="6.500" width="8" height="3.500" ${F}/><rect x="8" y="12" width="8" height="3.500" ${F}/><path d="M3 4v9.500h5M3 8h5" opacity=".6"/>`,
newcol:`<path d="M8 2.500H1.500V6h9M2.500 6v8.500h11V9M5 9h4"/><circle cx="12.500" cy="3.500" r="3.300" ${F}/><path d="M12.500 1.500v4M10.500 3.500h4" stroke="#444"/>`,
tri:'<path d="M2 1.800h12L8 14z" stroke-width="3" fill="#3a2413" stroke-linejoin="round"/>',
eye:`<path fill-rule="evenodd" d="M0 8q8-10 16 0-8 10-16 0zM8 4a4 4 0 1 0 .01 0z" ${F}/><circle cx="8" cy="8" r="2.300" ${F}/>`,
cam:`<path fill-rule="evenodd" d="M0 4h4l1.500-2.500h5L12 4h4v11H0zM8 5a4 4 0 1 0 .01 0z" ${F}/><circle cx="8" cy="9" r="2.400" ${F}/>`,
bez:'<path d="M1 2h6q2 3-1 5-3 2 0 4h8M11.500 8l3 3-3 3"/>',coll:`<rect x="1" y="1" width="14" height="4" ${F}/><path fill-rule="evenodd" d="M2 6h12v9H2zM6 8v2h4V8z" ${F}/>`,
movief:`<circle cx="4.500" cy="4" r="2.800" stroke-width="2"/><circle cx="11.500" cy="4" r="2.600" stroke-width="2"/><path d="M3 8h8v2l4-2v6l-4-2v3H3z" ${F}/>`,
bulb:`<circle cx="8" cy="6" r="4.800" fill="#5b3a22" stroke-width="1.600"/><path d="M8 5v5M5 13h6M6 15h4M6 5l2 2 2-2"/>`,sun:'<circle cx="8" cy="8" r="3"/><path d="M8 0v3M8 13v3M0 8h3M13 8h3M2.500 2.500l2 2M11.500 11.500l2 2M13.500 2.500l-2 2M4.500 11.500l-2 2"/>',
camd:'<rect x="2" y="1" width="12" height="5.500" rx="2.500"/><rect x="3" y="9" width="7" height="5"/><path d="M10 11l4-2v5z"/>',
geo:`<circle cx="11" cy="11.500" r="3.700" ${F}/><circle cx="4.500" cy="8.500" r="2.300" ${F} opacity=".8"/><circle cx="7.500" cy="3.500" r="1.900" ${F} opacity=".6"/><circle cx="2.500" cy="2.500" r="1.700" ${F} opacity=".4"/>`,
shield:'<path d="M8 1.500q3 2 6 1.500v5q-1 4-6 6.500Q3 12 2 8V3q3 .5 6-1.500z" opacity=".7"/>',ball:'<circle cx="8" cy="8" r="6"/><path d="M4.500 8q0-3 3-3.500"/>',grip:'<path d="M2 6h12M2 10h12" stroke-dasharray="1.500 2"/>',
clock:`<circle cx="8" cy="8" r="7" ${F}/><path d="M9 3.500L6.500 8l3 3.500" stroke="#222" stroke-width="1.800"/>`,clk:'<circle cx="8" cy="9" r="5.500"/><path d="M8 5.500V9h3M6 1.500h4"/>',pl:`<path d="M12 3v10L4 8z" ${F}/>`,pr:`<path d="M4 3v10l8-5z" ${F}/>`,
props:`<rect x="0" y="1" width="16" height="6" rx="3" ${F}/><rect x="0" y="9" width="16" height="6" rx="3" ${F}/><circle cx="12" cy="4" r="2" fill="#222" stroke="none"/><circle cx="5" cy="12" r="2" fill="#222" stroke="none"/>`,
tools:`<path d="M3.500 1v7" stroke-width="1.500"/><rect x="2" y="8" width="3.500" height="7" rx="1.500" ${F}/><path d="M8 1v4l3 2 3-2V1M11 7v8" stroke-width="2.200"/>`,
render:`<path d="M1 5h14v9.500H1zM4 5V2h6v3"/><path d="M3 8h8M3 11h8M13 8v4" stroke-width="1.800"/>`,printer:`<path d="M1 2h14v3H1z" fill="currentColor"/><path d="M1 5h14v5H1zM4 8v6.500h8V8"/><path d="M5 14l2-3 2 2 2-3v4z" ${F}/>`,
part:`<circle cx="3" cy="3" r="2.500" ${F}/><path d="M6 3h9M3 6v9M5 5l8 8M9 9v5M9 9h5" opacity=".8"/>`,phys:`<circle cx="8" cy="8" r="3" ${F}/><path d="M8 1.500a6.500 6.500 0 1 0 6.500 6.500"/><circle cx="13" cy="3" r="1.300" ${F}/>`,
cons:'<circle cx="6" cy="10" r="4.500"/><circle cx="6" cy="10" r="1.500"/><path d="M6 5.500L12 2q4 0 2 4l-4 4"/>',
edit:`<path d="M3.500 5v7M5 13h7M13 11V7M5 3.500h5" stroke-dasharray="2 1"/><rect x="10" y="1" width="5" height="5" ${F}/><rect x="2" y="2" width="3" height="3"/><rect x="2" y="11.500" width="3" height="3"/><rect x="11.500" y="11.500" width="3" height="3"/>`,
mon:`<rect x="1" y="2" width="14" height="9"/><rect x="3.500" y="4" width="9" height="5" ${F}/><path d="M8 11v3M4.500 14.200h7"/>`,
ml:`<path d="M3 7V4q0-3 3-3h2v7H3z" ${F}/><rect x="3" y="1" width="10" height="14" rx="3.500"/>`,mr:`<path d="M8 1h2q3 0 3 3v4H8z" ${F}/><rect x="3" y="1" width="10" height="14" rx="3.500"/>`
};
const I=(n,c='',x='')=>`<svg class="ic ${c}" viewBox="0 0 16 16" aria-hidden="true" ${x}>${P[n]||''}</svg>`;
const $=s=>document.getElementById(s);
/* spreadsheet tree */
const S=[[0,'prim','(几何体)','',1],['h','域'],[0,'mesh','网格'],[1,'vert','顶点',10],[1,'edge','边',13],[1,'face','面',4],[1,'corn','面拐',16],[0,'curve','曲线'],[1,'ctrl','控制点',0],[1,'spl','样条线',0],[0,'gp','蜡笔'],[1,'layer','层',0],[0,'pc','点云'],[1,'pt','点',0,1],[2,'vol','体积栅格',0],[2,'inst','实例',0]];
$('ss').insertAdjacentHTML('beforeend',S.map((r,k)=>r[0]==='h'?`<div class="ss-h d-flex align-items-center mb-1">${I('cd')}<span class="ms-1">${r[1]}</span></div>`:
`<div class="ss-r d-flex align-items-center ${r[4]?'on':''} ${k==0?'mt-1 mb-0':''}">${r[0]===0&&k?I('cd'):'<span style="width:16px"></span>'}<span class="ms-1" style="padding-left:${r[0]===1?14:0}px">${I(r[1])}</span><span style="margin-left:10px">${r[2]}</span><span class="cnt">${r[3]??''}</span></div>`).join(''));
/* outliner rows */
const names=['005','006','007','008','009','010','017b','020','021b','022b','023','024m','025','026b','027','028'];
const rightIc=`<span class="ms-auto d-flex" style="gap:7px;color:#ddd">${I('eye')}${I('cam')}</span>`;
const row=(ind,ic,cl,t,mods)=>`<div class="ol-r d-flex align-items-center" style="padding-left:${ind}px">${I('cr','ic-sm')}<span class="${cl}" style="margin-left:8px">${I(ic)}</span><span style="margin:0 25px 0 7px">${t}</span><span class="d-flex" style="gap:6px">${mods}</span>${rightIc}</div>`;
const W=`<span class="bl">${I('wrench')}</span>`,M=`<span class="gr">${I('mesh')}</span>`,B=I('bez','','opacity=".8"');
$('ol').innerHTML=names.map(n=>row(48,'tri','or','Plane.'+n.slice(0,3),n[3]=='b'?B+W+M:n[3]=='m'?M:W+M)).join('')+row(48,'tri','or','平房顶',W+M)+
`<div class="ol-r d-flex align-items-center" style="padding-left:46px;color:#777">${I('coll')}<span class="ms-2">集合2</span><span class="ms-auto d-flex align-items-center" style="gap:7px"><input type="checkbox" aria-label="启用集合2" style="appearance:none;width:12px;height:12px;border:1px solid #bbb;margin-right:1px"><span class="opacity-50">${I('eye')}</span><span class="opacity-50">${I('cam')}</span></span></div>`+
row(26,'movief','or','Camera',`<span class="gr rounded-1" style="background:#5a6b64;padding:3px;margin-left:-3px">${I('camd')}</span>`)+row(26,'bulb','or','Sun.001',`<span class="gr">${I('sun')}</span>`)+row(26,'tri','or','Suzanne',M);
/* group interface */
const G=[['几何数据',''],['几何数据','#00e2a0'],['开关','#a1a1a1'],['活动窗比例','#a1a1a1'],['活动窗类型','#666'],['随机种','#5a8f5c'],['单元大小','#5a9c5a'],['玻璃'],['玻璃边框厚度','#a1a1a1',1],['玻璃边框半径','#a1a1a1',1],['玻璃厚度','#a1a1a1',1],['玻璃颜色','#c7d72f',1],['玻璃边框颜色','#c7d72f',1],['规格'],['飘窗上高','#a1a1a1',1]];
$('gl').insertAdjacentHTML('beforeend',G.map(g=>g.length==1?`<div class="gr-r" style="padding-left:9px">${I('cd','ic-sm')}<span class="ms-1">${g[0]}</span></div>`:
`<div class="gr-r" style="padding-left:${g[2]?47:32}px"><span class="dot" style="background:${g[1]||'transparent'}"></span><span style="margin-left:8px">${g[0]}</span>${g[1]?'':'<span class="dot ms-auto" style="background:#00e2a0;margin-right:34px"></span>'}</div>`).join('')+`<div class="d-flex justify-content-center opacity-50">${I('grip')}</div>`);
/* nodes */
const sk=(t,side)=>t==='-'?'':`<span class="sk ${side} ${t}"></span>`;
function nodeHTML(n){let first=true;return `<div class="nd" style="left:${n.x}px;top:${n.y}px;${n.b?'outline:1px solid '+n.b:''}"><div class="nd-h ${n.c||''}">${I('cd')}<span>${n.t}</span>${n.eye?'<span class="ms-auto">'+I('eye')+'</span>':''}</div>`+n.r.map(r=>{
 if(r[0]=='o')return `<div class="nr justify-content-end">${r[1]}${sk(r[2]||'','r')}</div>`;
 if(r[0]=='i')return `<div class="nr">${sk(r[2]||'','l')}${r[1]}</div>`;
 if(r[0]=='s'){const f=first;first=false;return `<div class="nr s ${f?'f':''}"><select class="pick" aria-label="${r[1]}"><option>${r[1]}</option></select></div>`}
 if(r[0]=='n')return `<div class="nr">${sk(r[3]||'','l')}<label class="num">${r[1]}<input value="${r[2]}"></label></div>`;
 return `<label class="nr"><input type="checkbox">${r[1]}</label>`}).join('')+'</div>'}
const N=[
{x:170,y:68,t:'编号',c:'red',r:[['o','编号','g']]},
{x:317,y:45,t:'在域上评估',r:[['o','值','g'],['s','整数'],['s','面'],['i','值','g']]},
{x:290,y:145,t:'预览器',c:'vw',b:'#c5502a',eye:1,r:[['s','自动'],['i','几何数据','c'],['i','值']]},
{x:117,y:205,t:'累积场',b:'#fff',r:[['o','首'],['o','尾'],['o','总数'],['s','浮点'],['s','面'],['n','值','1.000','h'],['i','群组 ID','g']]},
{x:-75,y:279,t:'',c:'red',r:[['o','岛编号','g'],['o','岛数量','g']]},
{x:591,y:66,t:'大于',r:[['o','结果','h'],['s','浮点'],['s','大于'],['n','A','0.000','h'],['n','B','0.000','h']]},
{x:541,y:195,t:'吸附',r:[['o','值'],['s','吸附'],['k','钳制'],['i','值'],['i','增量']]},
{x:868,y:269,t:'等于',r:[['o','结果'],['s','浮点'],['s','等于'],['i','A'],['i','B'],['n','Epsilon','0.001','h']]},
{x:507,y:344,t:'相除',r:[['o','值'],['s','相除'],['k','钳制'],['i','值'],['i','值']]},
{x:688,y:353,t:'吸附',r:[['o','值'],['s','吸附'],['k','钳制'],['i','值'],['i','增量']]}];
$('cv1').insertAdjacentHTML('beforeend',N.map(nodeHTML).join(''));
$('cv0').insertAdjacentHTML('beforeend',nodeHTML({x:22,y:351,t:'混合着色器',c:'grn',r:[['o','着色器','-'],['i','系数'],['i','着色器','k'],['i','着色器','k']]}));
const L=[[275,94,317,125,'#5f8a68'],[30,305,117,333,'#9cae9e'],[222,247,541,275,'#8f8f8f'],[222,263,507,424,'#8f8f8f'],[541,291,380,446,'#666'],[10,347,293,446,'#454545'],[646,221,868,350,'#8f8f8f'],[793,379,868,366,'#8f8f8f'],[612,370,688,433,'#8f8f8f'],[973,295,988,60,'#8f8f8f'],[396,145,714,7,'url(#lg)',2],[714,7,989,0,'#12c790',2],[707,0,714,7,'#12c790',2]];
const ln=l=>`<line x1="${l[0]}" y1="${l[1]}" x2="${l[2]}" y2="${l[3]}" stroke="${l[4]}" stroke-width="${l[5]||1}"/>`;
$('lk0').insertAdjacentHTML('beforeend',L.map(ln).join('')+'<circle cx="714" cy="7" r="4" fill="#00e2a0"/>');
$('cv1').insertAdjacentHTML('beforeend','<svg style="pointer-events:none" aria-hidden="true">'+ln([222,231,590,163,'#b5b5b5'])+ln([222,247,290,207,'#a5a5a5'])+'</svg>');
/* modifier panels */
let uid=0;
const head=(t)=>`<div class="phead d-flex align-items-center" style="height:22px"><button aria-label="折叠">${I('cd')}</button><i class="mx-2 opacity-75">${I('geo')}</i><input class="fld ps-2 flex-fill rounded-start-1" value="${t}" aria-label="修改器名称"><button class="sq" aria-label="网格">${I('mesh')}</button><button class="sq on border-start border-dark" aria-label="编辑模式">${I('edit')}</button><button class="sq on border-start border-dark" aria-label="视图">${I('mon')}</button><button class="sq on border-start border-dark" aria-label="渲染">${I('cam')}</button><button class="sq fld" style="background:#282828" aria-label="更多">${I('cd','ic-sm')}</button><button class="sq ms-1" style="background:none" aria-label="移除">${I('x')}</button><span class="opacity-50 ms-1">${I('grip')}</span></div>`;
const grp=(t,n)=>`<div class="d-flex align-items-center" style="margin:11px 0 6px 4px"><button class="bx chip" style="width:33px" aria-label="节点组">${I('tree')}${I('cd','ic-sm')}</button><input class="fld ps-2 flex-fill" value="${t}" aria-label="节点组名">${n?`<button class="sq" style="width:72px">${n}</button>`:''}<button class="sq" aria-label="伪用户">${I('shield')}</button><button class="sq" aria-label="新建">${I('copy')}</button><button class="sq rounded-end-1" aria-label="断开">${I('x')}</button></div>`;
const num=(l,v,c='')=>{const i='p'+uid++;return `<div class="pr ${c}"><label for="${i}">${l}</label><input id="${i}" class="val" value="${v}"><span class="at"></span><span class="kd"></span></div>`};
const sld=(l,v,p)=>{const i='p'+uid++;return `<div class="pr"><label for="${i}">${l}</label><span class="vw"><span class="bar" style="width:${p}%"></span><input id="${i}" value="${v}"></span><span class="at">${I('sheet','ic-lg')}</span><span class="kd"></span></div>`};
$('pn').innerHTML=`<div class="pn" style="margin-bottom:5px">${head('外墙')}${grp('墙面','20')}${num('X轴长度','6.1 m')}${num('高度','3 m')}${num('单位间隔','1.000')}${num('旋转 X','-90°','tight')}${num('Y','0°','tight')}${num('Z','0°','tight')}<div class="d-flex align-items-center ps-2" style="height:29px">${I('cr','ic-sm')}<span class="ms-2">管理</span></div></div>`+
`<div class="pn act">${head('GeometryNodes')}${grp('阳台')}${sld('开关','0.095',9)}${sld('活动窗比例','0.700',70)}<div class="pr"><label for="wt">活动窗类型</label><select id="wt" class="pick val ps-2"><option>左开窗</option></select><span class="at"></span><span class="kd"></span></div>${sld('随机种','11',0)}</div>`;
document.querySelectorAll('i[data-i]').forEach(e=>e.innerHTML=I(e.dataset.i,e.dataset.c||''));
</script>
</body>
</html>
